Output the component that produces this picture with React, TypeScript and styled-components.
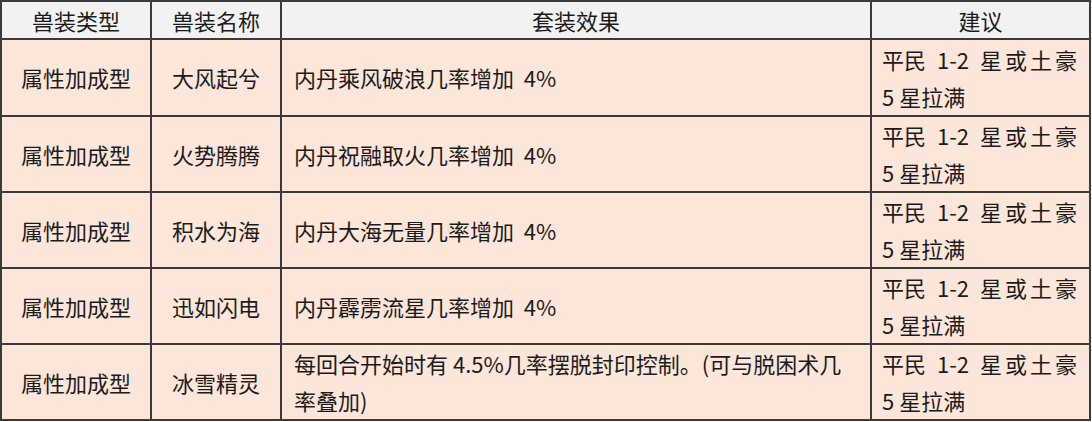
import React from "react";
import styled, { createGlobalStyle } from "styled-components";

const Global = createGlobalStyle`
  html, body { margin: 0; padding: 0; background: #ffffff; }
  body { font-family: "Noto Sans CJK SC", "Noto Sans", sans-serif; }
`;

const Table = styled.table`
  border-collapse: collapse;
  table-layout: fixed;
  width: 1091px;
  font-family: "Noto Sans CJK SC", "Noto Sans", sans-serif;
  font-size: 22px;
  color: #1b1b1b;
`;

const HeadCell = styled.th`
  background: #f2f2f2;
  border: 2px solid #3a3a3a;
  height: 36px;
  padding: 0;
  font-weight: 400;
  line-height: 36px;
  text-align: center;
`;

const Row = styled.tr<{ $h: number }>`
  height: ${(p) => p.$h}px;
`;

const Cell = styled.td<{ $align?: "center" | "left"; $pl?: number; $pr?: number }>`
  background: #fce5d9;
  border: 2px solid #3a3a3a;
  padding: 0 ${(p) => p.$pr ?? 0}px 0 ${(p) => p.$pl ?? 0}px;
  text-align: ${(p) => p.$align ?? "center"};
  vertical-align: middle;
  line-height: 37px;
  overflow: hidden;
`;

const JustLine = styled.span`
  display: block;
  text-align: justify;
  text-align-last: justify;
  white-space: nowrap;
`;

const Group = styled.span<{ $ls: number }>`
  display: inline-block;
  letter-spacing: ${(p) => p.$ls}px;
`;

const PlainLine = styled.span`
  display: block;
  text-align: left;
`;

type RowData = { type: string; name: string; effect: string; h: number };

const rows: RowData[] = [
  { type: "属性加成型", name: "大风起兮", effect: "内丹乘风破浪几率增加\u00a0 4%", h: 77 },
  { type: "属性加成型", name: "火势腾腾", effect: "内丹祝融取火几率增加\u00a0 4%", h: 75 },
  { type: "属性加成型", name: "积水为海", effect: "内丹大海无量几率增加\u00a0 4%", h: 73 },
  { type: "属性加成型", name: "迅如闪电", effect: "内丹霹雳流星几率增加\u00a0 4%", h: 73 },
  {
    type: "属性加成型",
    name: "冰雪精灵",
    effect: "每回合开始时有 4.5%几率摆脱封印控制。(可与脱困术几率叠加)",
    h: 75,
  },
];

export default function App() {
  return (
    <>
      <Global />
      <Table>
        <colgroup>
          <col style={{ width: 150 }} />
          <col style={{ width: 130 }} />
          <col style={{ width: 590 }} />
          <col style={{ width: 219 }} />
        </colgroup>
        <thead>
          <tr>
            <HeadCell>兽装类型</HeadCell>
            <HeadCell>兽装名称</HeadCell>
            <HeadCell>套装效果</HeadCell>
            <HeadCell>建议</HeadCell>
          </tr>
        </thead>
        <tbody>
          {rows.map((r, i) => (
            <Row key={i} $h={r.h}>
              <Cell>{r.type}</Cell>
              <Cell>{r.name}</Cell>
              <Cell $align="left" $pl={12} $pr={26}>
                {r.effect}
              </Cell>
              <Cell $align="left" $pl={10} $pr={9}>
                <JustLine>
                  <Group $ls={0}>平民</Group> <Group $ls={0}>1-2</Group>{" "}
                  <Group $ls={3}>星或土豪</Group>
                </JustLine>
                <PlainLine>5 星拉满</PlainLine>
              </Cell>
            </Row>
          ))}
        </tbody>
      </Table>
    </>
  );
}
